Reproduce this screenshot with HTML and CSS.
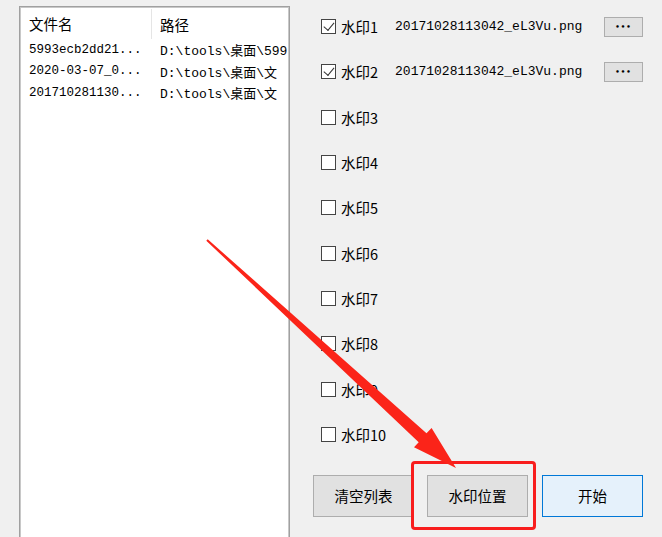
FILE: index.html
```html
<!DOCTYPE html>
<html lang="zh-CN">
<head>
    <meta charset="UTF-8">
    <title>水印</title>
    <link rel="stylesheet" href="styles.css">
</head>
<body>
    <div class="window">
        <div class="list-box">
            <div class="list-header">
                <div class="col col-name">文件名</div>
                <div class="col col-path">路径</div>
            </div>
            <div class="list-row">
                <div class="col col-name">5993ecb2dd21...</div>
                <div class="col col-path">D:\tools\桌面\599</div>
            </div>
            <div class="list-row">
                <div class="col col-name">2020-03-07_0...</div>
                <div class="col col-path">D:\tools\桌面\文</div>
            </div>
            <div class="list-row">
                <div class="col col-name">201710281130...</div>
                <div class="col col-path">D:\tools\桌面\文</div>
            </div>
        </div>

        <div class="side">
            <div class="marks">
                <div class="mark-row">
                    <span class="check checked"></span><span class="mark-label">水印1</span>
                    <span class="mark-file">20171028113042_eL3Vu.png</span>
                    <button class="dots">•••</button>
                </div>
                <div class="mark-row">
                    <span class="check checked"></span><span class="mark-label">水印2</span>
                    <span class="mark-file">20171028113042_eL3Vu.png</span>
                    <button class="dots">•••</button>
                </div>
                <div class="mark-row"><span class="check"></span><span class="mark-label">水印3</span></div>
                <div class="mark-row"><span class="check"></span><span class="mark-label">水印4</span></div>
                <div class="mark-row"><span class="check"></span><span class="mark-label">水印5</span></div>
                <div class="mark-row"><span class="check"></span><span class="mark-label">水印6</span></div>
                <div class="mark-row"><span class="check"></span><span class="mark-label">水印7</span></div>
                <div class="mark-row"><span class="check"></span><span class="mark-label">水印8</span></div>
                <div class="mark-row"><span class="check"></span><span class="mark-label">水印9</span></div>
                <div class="mark-row"><span class="check"></span><span class="mark-label">水印10</span></div>
            </div>
            <div class="actions">
                <button class="btn">清空列表</button>
                <div class="highlight">
                    <button class="btn">水印位置</button>
                </div>
                <button class="btn primary">开始</button>
            </div>
        </div>

        <!-- flecha de anotación -->
        <svg class="arrow" width="662" height="537" viewBox="0 0 662 537">
            <polygon points="207.7,239.3 426.5,433.2 431.6,428 456,468 414,447.2 418.7,442.3 206.3,240.7" fill="#fb2419"/>
        </svg>
    </div>
</body>
</html>
```

FILE: styles.css
```css
* {
    margin: 0;
    padding: 0;
    box-sizing: border-box;
}

body {
    font-family: "Noto Sans CJK SC", "Noto Sans", sans-serif;
    font-size: 13px;
    color: #000;
    background-color: #f0f0f0;
    width: 662px;
    height: 537px;
    overflow: hidden;
}

.window {
    position: relative;
    display: flex;
    height: 537px;
}

.list-box {
    margin-left: 19px;
    margin-top: 6px;
    width: 271px;
    height: 545px;
    background-color: #fff;
    border: 1px solid #a0a0a0;
    box-shadow: inset 1px 1px 0 #c8c8c8, inset -1px 0 0 #c8c8c8;
    overflow: hidden;
}

.list-header {
    display: flex;
    height: 32px;
    align-items: center;
    font-size: 14.5px;
    padding-top: 2px;
}

.list-header .col-name {
    border-right: 1px solid #e5e5e5;
    height: 30px;
    line-height: 30px;
}

.list-row {
    display: flex;
    height: 21.5px;
    align-items: center;
    font-family: "Liberation Mono", "Noto Sans CJK SC", monospace;
    font-size: 12.5px;
    white-space: nowrap;
}

.list-row .col-path {
    font-size: 13px;
}

.col {
    white-space: nowrap;
    overflow: hidden;
}

.col-name {
    width: 132px;
    padding-left: 9px;
    flex: none;
}

.col-path {
    padding-left: 8px;
}

.side {
    margin-left: 23px;
    flex: 1;
}

.marks {
    padding-top: 4px;
}

.mark-row {
    display: flex;
    align-items: center;
    height: 45.3px;
    padding-left: 8px;
}

.check {
    width: 15px;
    height: 15px;
    border: 1.5px solid #444;
    background-color: #fff;
    flex: none;
    position: relative;
}

.check.checked::after {
    content: "";
    position: absolute;
    left: 4px;
    top: 0px;
    width: 4.5px;
    height: 9px;
    border-right: 1.5px solid #333;
    border-bottom: 1.5px solid #333;
    transform: rotate(40deg);
}

.mark-label {
    margin-left: 5px;
    font-size: 14.5px;
}

.mark-file {
    margin-left: 17px;
    width: 195px;
    font-family: "Liberation Mono", monospace;
    font-size: 13px;
}

.dots {
    margin-left: 14px;
    width: 39px;
    height: 20px;
    background-color: #e1e1e1;
    border: 1px solid #adadad;
    font-size: 7px;
    letter-spacing: 1px;
    color: #000;
    font-family: "DejaVu Sans", sans-serif;
    font-weight: bold;
}

.actions {
    display: flex;
    align-items: flex-start;
    margin-top: 18px;
}

.btn {
    width: 101px;
    height: 42px;
    background-color: #e1e1e1;
    border: 1px solid #adadad;
    font-family: "Noto Sans CJK SC", sans-serif;
    font-size: 14.5px;
    color: #000;
}

.highlight {
    margin-left: -3px;
    margin-top: -14px;
    padding: 11px 5px 10px 13px;
    border: 3px solid #f81d1d;
    border-radius: 4px;
}

.btn.primary {
    margin-left: 6px;
    background-color: #e5f1fb;
    border-color: #0078d7;
}

.arrow {
    position: absolute;
    left: 0;
    top: 0;
    pointer-events: none;
}
```
